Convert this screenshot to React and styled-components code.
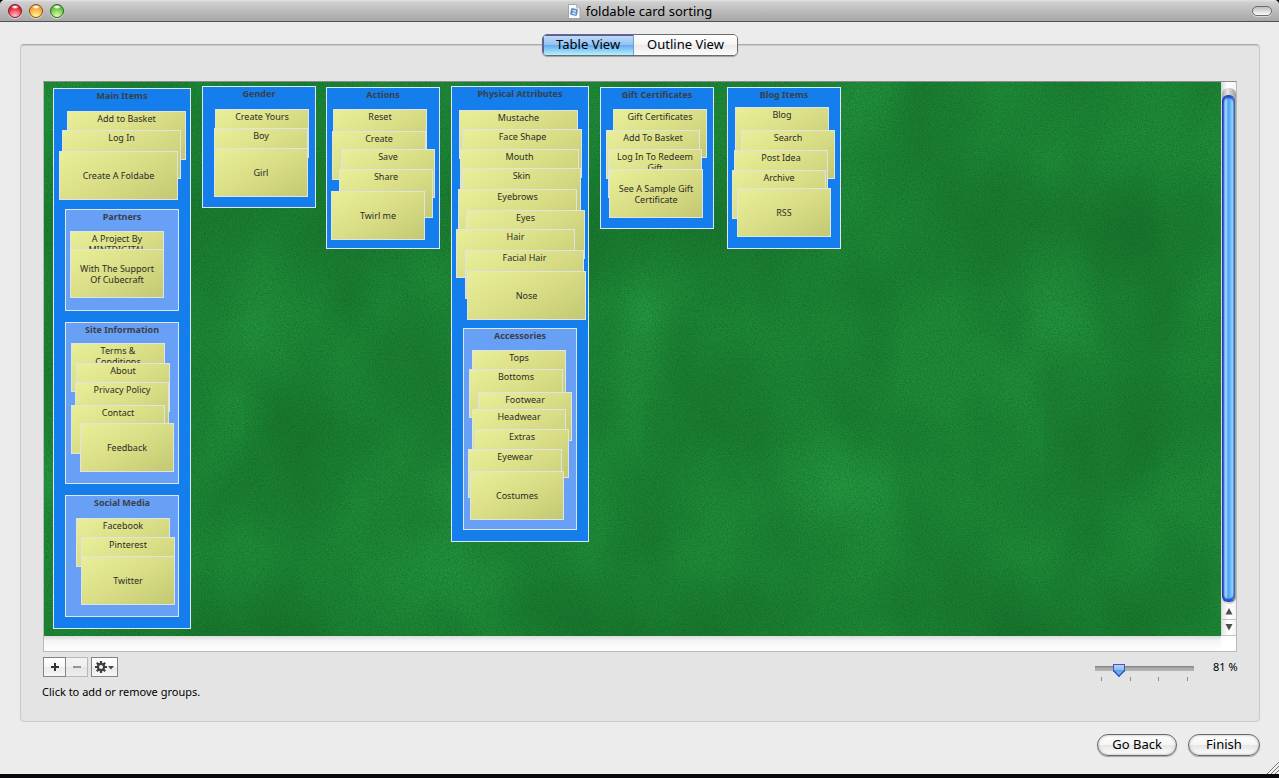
import React, { useState } from "react";
import styled, { createGlobalStyle, css } from "styled-components";

const GlobalStyle = createGlobalStyle`
  *, *::before, *::after { box-sizing: border-box; }
  body {
    margin: 0;
    background: #08090c;
    color: #000;
    font-family: "Noto Sans", "Open Sans", "Liberation Sans", sans-serif;
    font-size: 13px;
  }
  button { font: inherit; color: inherit; margin: 0; padding: 0; }
  ul { list-style: none; margin: 0; padding: 0; }
`;

/* ---------- window ---------- */

const Desktop = styled.div`
  display: flex;
  flex-direction: column;
  min-height: 100vh;
  padding-bottom: 4px;
  background: #08090c;
`;

const Window = styled.div`
  position: relative;
  flex: 1;
  display: flex;
  flex-direction: column;
  border-radius: 5px 5px 0 0;
  overflow: hidden;
  background: #ececec;
`;

const TitleBar = styled.header`
  display: grid;
  grid-template-columns: 1fr auto 1fr;
  align-items: center;
  height: 22px;
  padding: 0 7px 0 8px;
  background: linear-gradient(#e4e4e4 0, #cfcfcf 2px, #a7a7a7 100%);
  border-bottom: 1px solid #515151;
`;

const Lights = styled.div`
  display: flex;
  gap: 7px;
`;

const lightColors = {
  red: ["#7d1a22", "#e3122d", "#ffb3b3"],
  amber: ["#8f4d10", "#f39a2b", "#fff08a"],
  green: ["#2c6a1c", "#57b93a", "#d2f7a0"],
};

const Light = styled.button`
  width: 14px;
  height: 14px;
  border: 1px solid ${(p) => lightColors[p.$tone][0]};
  border-radius: 50%;
  background:
    radial-gradient(ellipse 4px 2px at 50% 2px, #fff 30%, transparent 100%),
    radial-gradient(circle at 50% 95%, ${(p) => lightColors[p.$tone][2]} 10%, ${(p) => lightColors[p.$tone][1]} 75%);
  box-shadow: 0 1px 0 rgba(255, 255, 255, 0.6);
`;

const Title = styled.h1`
  display: flex;
  align-items: center;
  gap: 5px;
  margin: 0;
  font-size: 13px;
  font-weight: 400;
  line-height: 20px;
`;

const Pill = styled.button`
  justify-self: end;
  width: 20px;
  height: 10px;
  border: 1px solid #6d6d6d;
  border-radius: 5px;
  background: linear-gradient(#bdbdbd, #fafafa);
  box-shadow: 0 1px 0 rgba(255, 255, 255, 0.5);
`;

const Content = styled.main`
  flex: 1;
  display: flex;
  flex-direction: column;
  padding: 12px 19px 18px 20px;
`;

const Tabs = styled.div`
  align-self: center;
  display: flex;
  z-index: 1;
  height: 22px;
  margin-bottom: -12px;
  border: 1px solid #6b6b6b;
  border-radius: 5px;
  overflow: hidden;
  box-shadow: 0 1px 1px rgba(0, 0, 0, 0.3);
`;

const Tab = styled.button`
  padding: 0 13px 2px;
  border: 0;
  line-height: 18px;
  background: linear-gradient(#fff, #f4f4f4 50%, #e9e9e9 50%, #fbfbfb);
  ${(p) =>
    p.$active &&
    css`
      border-right: 1px solid #6f9fce;
      background: linear-gradient(#c5dcf7 0, #92c3f4 48%, #62a9ee 50%, #b5f1ff 100%);
      box-shadow: inset 0 1px 0 #5a56c0, inset 1px 0 0 #4f62b8;
    `}
`;

const Panel = styled.section`
  flex: 1;
  display: flex;
  flex-direction: column;
  padding: 36px 22px 20px;
  border: 1px solid #cacaca;
  border-top-color: #a9a9a9;
  border-radius: 4px;
  background: #e4e4e4;
  box-shadow: inset 0 1px 1px rgba(0, 0, 0, 0.1);
`;

/* ---------- sorting table ---------- */

const Frame = styled.div`
  flex: 1;
  display: grid;
  grid-template-columns: 1fr 15px;
  grid-template-rows: 1fr 15px;
  border: 1px solid #b9b9b9;
  border-top-color: #8d8d8d;
  background: #fff;
`;

const Felt = styled.div`
  position: relative;
  min-height: 554px;
  overflow: hidden;
  background:
    radial-gradient(ellipse 60px 120px at 202px 240px, rgba(44, 170, 76, 0.5), rgba(44, 170, 76, 0.14) 55%, transparent) 0 0 / 400px 100%,
    radial-gradient(ellipse 110px 70px at 200px 405px, rgba(44, 170, 76, 0.45), rgba(44, 170, 76, 0.14) 55%, transparent) 200px 0 / 400px 100%,
    radial-gradient(ellipse 70px 50px at 200px 485px, rgba(44, 170, 76, 0.25), transparent) 200px 0 / 400px 100%,
    radial-gradient(ellipse 80px 60px at 200px 20px, rgba(44, 170, 76, 0.25), transparent) 200px 0 / 400px 100%,
    radial-gradient(ellipse 120px 80px at 80px 345px, rgba(14, 84, 30, 0.2), transparent) 200px 0 / 400px 100%,
    radial-gradient(ellipse 110px 90px at 280px 150px, rgba(14, 84, 30, 0.3), transparent) 0 0 / 400px 100%,
    radial-gradient(ellipse 110px 80px at 130px 140px, rgba(14, 84, 30, 0.25), transparent) 0 0 / 400px 100%,
    radial-gradient(ellipse 190px 70px at 200px 550px, rgba(14, 84, 30, 0.3), transparent) 0 0 / 400px 100%,
    #1e8c39;
`;

const Grain = styled.svg`
  position: absolute;
  inset: 0;
  width: 100%;
  height: 100%;
`;

const Group = styled.section`
  position: absolute;
  left: ${(p) => p.$x}px;
  top: ${(p) => p.$y}px;
  width: ${(p) => (p.$wide ? 138 : 114)}px;
  height: ${(p) => p.$h}px;
  border: 1px solid #dfe6f0;
  background: ${(p) => (p.$nested ? "#68a0f5" : "#137eec")};
`;

const GroupTitle = styled.h2`
  margin: 1px 0 0;
  font-size: 9px;
  line-height: 12px;
  font-weight: 700;
  text-align: center;
  color: #3a3f49;
`;

const Card = styled.li`
  position: absolute;
  left: ${(p) => p.$x}px;
  top: ${(p) => p.$y}px;
  width: ${(p) => (p.$wide ? 119 : 94)}px;
  height: 49px;
  display: flex;
  align-items: ${(p) => (p.$front ? "center" : "flex-start")};
  justify-content: center;
  padding: ${(p) => (p.$front ? 0 : 1)}px 5px 0;
  border: 1px solid #e0e3e4;
  background: linear-gradient(150deg, #e9ef98, #d8dd86 50%, #c3c872);
  color: #2b2c26;
  font-size: 9px;
  line-height: 11px;
  text-align: center;
`;

/* ---------- scroll bars ---------- */

const VerticalBar = styled.div`
  display: flex;
  flex-direction: column;
  padding-top: 6px;
  border-left: 1px solid #d8d8d8;
  background: linear-gradient(90deg, #dedede, #fff 40%, #f2f2f2);
`;

const ThumbWell = styled.div`
  flex: 1;
  padding: 7px 1px 2px 0;
  border-radius: 7px 7px 8px 8px;
  background: linear-gradient(90deg, #aaa, #e4e4e4 40%, #9c9c9c);
`;

const Thumb = styled.div`
  height: 100%;
  border: 1px solid #1c3fb4;
  border-right-color: #3b6c9c;
  border-radius: 6px;
  background:
    linear-gradient(90deg, #2b5ee0 0, #a8d4fb 2px, #8cc4f9 4px, #4aa0f3 5px, #6cc0fb 8px, #aeeaff 10px, #4c90d8 12px);
  box-shadow: inset 0 2px 2px #2140c8, inset 0 -2px 2px #1b45d8;
`;

const ArrowButton = styled.button`
  display: grid;
  place-items: center;
  height: 16px;
  border: 0;
  border-bottom: 1px solid #c4c4c4;
  background: linear-gradient(90deg, #e6e6e6, #fff 50%, #f3f3f3);
`;

const HorizontalBar = styled.div`
  background: linear-gradient(#dcdcdc, #f6f6f6 5px, #fff);
`;

/* ---------- tools under the table ---------- */

const Tools = styled.div`
  display: flex;
  align-items: flex-start;
  gap: 3px;
  margin-top: 5px;
  height: 26px;
`;

const SquareButtons = styled.div`
  display: flex;
`;

const SquareButton = styled.button`
  display: grid;
  place-items: center;
  width: ${(p) => (p.$menu ? 27 : 23)}px;
  height: 20px;
  border: 1px solid #858585;
  background: linear-gradient(#fff, #f7f7f7 50%, #eaeaea 50%, #f6f6f6);
  &:disabled {
    border-color: #b9b9b9;
    border-left: 0;
    width: 22px;
    background: linear-gradient(#f3f3f3, #efefef 50%, #e6e6e6 50%, #ededed);
  }
`;

const Zoom = styled.div`
  display: flex;
  align-items: flex-start;
  gap: 19px;
  margin: 0 -2px 0 auto;
`;

const SliderColumn = styled.div`
  display: flex;
  flex-direction: column;
  width: 99px;
  padding-top: 7px;
`;

const Slider = styled.input`
  appearance: none;
  width: 100%;
  height: 13px;
  margin: 0;
  background: linear-gradient(#7b7b7b, #a9a9a9 2px, #b6b6b6) 0 2px / 100% 5px no-repeat;
  border-radius: 3px;
  &::-webkit-slider-thumb {
    appearance: none;
    width: 12px;
    height: 13px;
    border: 0;
    clip-path: polygon(0 0, 100% 0, 100% 7px, 50% 100%, 0 7px);
    background:
      linear-gradient(45deg, #3a4fc0 5px, transparent 6px),
      linear-gradient(-45deg, #3a4fc0 5px, transparent 6px),
      linear-gradient(#4a52c4, #4a52c4) 0 0 / 100% 1px no-repeat,
      linear-gradient(#4a52c4, #4a52c4) 0 0 / 1px 100% no-repeat,
      linear-gradient(#4a52c4, #4a52c4) 100% 0 / 1px 100% no-repeat,
      linear-gradient(#bdd6f6, #8dbdf0 45%, #5ba3e8 50%, #7cc4f4);
  }
`;

const Ticks = styled.div`
  display: flex;
  justify-content: space-between;
  padding: 0 6px;
`;

const Tick = styled.span`
  width: 1px;
  height: 4px;
  background: #8c8c8c;
`;

const ZoomValue = styled.output`
  width: 26px;
  font-size: 11px;
  line-height: 20px;
  white-space: nowrap;
`;

const Hint = styled.p`
  margin: 0 0 0 -1px;
  font-size: 11px;
  line-height: 18px;
`;

const Actions = styled.footer`
  display: flex;
  justify-content: flex-end;
  gap: 11px;
  margin-top: 12px;
`;

const PushButton = styled.button`
  height: 22px;
  min-width: 72px;
  padding: 0 14px 2px;
  border: 1px solid #686868;
  border-radius: 11px;
  line-height: 18px;
  background: linear-gradient(#fff, #f5f5f5 48%, #e6e6e6 52%, #fdfdfd);
  box-shadow: 0 1px 1px rgba(0, 0, 0, 0.3), inset 0 0 2px 1px rgba(0, 0, 0, 0.16);
`;

const Grip = styled.svg`
  position: absolute;
  right: 0;
  bottom: 0;
`;

/* ---------- data: [label, x, y] inside each group ---------- */

const groups = [
  {
    title: "Main Items", x: 9, y: 6, h: 541, wide: true,
    cards: [["Add to Basket", 13, 22], ["Log In", 8, 41], ["Create A Foldabe", 5, 62]],
    groups: [
      {
        title: "Partners", x: 11, y: 120, h: 102,
        cards: [["A Project By MINTDIGITAL", 4, 21], ["With The Support Of Cubecraft", 4, 39]],
      },
      {
        title: "Site Information", x: 11, y: 233, h: 162,
        cards: [["Terms & Conditions", 5, 20], ["About", 10, 40], ["Privacy Policy", 9, 59], ["Contact", 5, 82], ["Feedback", 14, 100]],
      },
      {
        title: "Social Media", x: 11, y: 406, h: 122,
        cards: [["Facebook", 10, 22], ["Pinterest", 15, 41], ["Twitter", 15, 60]],
      },
    ],
  },
  {
    title: "Gender", x: 158, y: 4, h: 122,
    cards: [["Create Yours", 12, 22], ["Boy", 11, 41], ["Girl", 11, 61]],
  },
  {
    title: "Actions", x: 282, y: 5, h: 162,
    cards: [["Reset", 6, 21], ["Create", 5, 43], ["Save", 14, 61], ["Share", 12, 81], ["Twirl me", 4, 103]],
  },
  {
    title: "Physical Attributes", x: 407, y: 4, h: 456, wide: true,
    cards: [
      ["Mustache", 7, 23], ["Face Shape", 11, 42], ["Mouth", 8, 62], ["Skin", 10, 81], ["Eyebrows", 6, 102],
      ["Eyes", 14, 123], ["Hair", 4, 142], ["Facial Hair", 13, 163], ["Nose", 15, 184],
    ],
    groups: [
      {
        title: "Accessories", x: 11, y: 241, h: 202,
        cards: [
          ["Tops", 8, 21], ["Bottoms", 5, 40], ["Footwear", 14, 63], ["Headwear", 8, 80],
          ["Extras", 11, 100], ["Eyewear", 4, 120], ["Costumes", 6, 142],
        ],
      },
    ],
  },
  {
    title: "Gift Certificates", x: 556, y: 5, h: 142,
    cards: [["Gift Certificates", 12, 21], ["Add To Basket", 5, 42], ["Log In To Redeem Gift", 7, 61], ["See A Sample Gift Certificate", 8, 81]],
  },
  {
    title: "Blog Items", x: 683, y: 5, h: 162,
    cards: [["Blog", 7, 19], ["Search", 13, 42], ["Post Idea", 6, 62], ["Archive", 4, 82], ["RSS", 9, 100]],
  },
];

function CardGroup({ group, nested }) {
  return (
    <Group $x={group.x} $y={group.y} $h={group.h} $wide={group.wide} $nested={nested}>
      <GroupTitle>{group.title}</GroupTitle>
      <ul>
        {group.cards.map(([label, x, y], i) => (
          <Card key={label} $x={x} $y={y} $wide={group.wide} $front={i === group.cards.length - 1}>
            {label}
          </Card>
        ))}
      </ul>
      {group.groups?.map((g) => <CardGroup key={g.title} group={g} nested />)}
    </Group>
  );
}

function DocumentIcon() {
  return (
    <svg width="13" height="16" viewBox="0 0 13 16" aria-hidden="true">
      <path d="M.5 1.500h8l3.500 3.500v10.500H.5z" fill="#fbfbfb" stroke="#a5a5a5" />
      <path d="M8.500 1.500v3.500H12z" fill="#ddd" stroke="#a5a5a5" strokeWidth=".7" />
      <rect x="2.500" y="5.500" width="7" height="7" rx="1.500" fill="#5f90c8" transform="rotate(12 6 9)" />
      <path d="M4.500 7.500l3.500.5-3.500 2.500 3.500.5" fill="none" stroke="#e4effb" />
    </svg>
  );
}

function GearIcon() {
  return (
    <svg width="21" height="14" viewBox="0 0 21 14" aria-hidden="true">
      <g stroke="#3f3f3f" strokeWidth="2.200">
        <path d="M7 1v12M1 7h12M2.800 2.800l8.400 8.400M11.200 2.800l-8.400 8.400" />
      </g>
      <circle cx="7" cy="7" r="4.200" fill="#3f3f3f" />
      <circle cx="7" cy="7" r="2" fill="#f1f1f1" />
      <path d="M14 6h6l-3 3.500z" fill="#4a4a4a" />
    </svg>
  );
}

export default function App() {
  const [view, setView] = useState("table");
  const [zoom, setZoom] = useState(81);
  return (
    <>
      <GlobalStyle />
      <Desktop>
        <Window>
          <TitleBar>
            <Lights>
              <Light $tone="red" aria-label="Close" />
              <Light $tone="amber" aria-label="Minimize" />
              <Light $tone="green" aria-label="Zoom" />
            </Lights>
            <Title>
              <DocumentIcon />
              foldable card sorting
            </Title>
            <Pill aria-label="Toggle toolbar" />
          </TitleBar>
          <Content>
            <Tabs role="tablist">
              <Tab role="tab" aria-selected={view === "table"} $active={view === "table"} onClick={() => setView("table")}>
                Table View
              </Tab>
              <Tab role="tab" aria-selected={view === "outline"} $active={view === "outline"} onClick={() => setView("outline")}>
                Outline View
              </Tab>
            </Tabs>
            <Panel>
              <Frame>
                <Felt>
                  <Grain aria-hidden="true">
                    <filter id="cloud" x="0" y="0" width="100%" height="100%" colorInterpolationFilters="sRGB">
                      <feTurbulence type="fractalNoise" baseFrequency="0.014 0.009" numOctaves="2" seed="9" />
                      <feColorMatrix values="0 0 0 0 0.07  0 0 0 0 0.38  0 0 0 0 0.13  0.7 0 0 0 -0.22" />
                    </filter>
                    <filter id="grain" x="0" y="0" width="100%" height="100%" colorInterpolationFilters="sRGB">
                      <feTurbulence type="fractalNoise" baseFrequency="0.71" numOctaves="2" seed="4" />
                      <feColorMatrix values="0 0 0 0 0.05  0 0 0 0 0.3  0 0 0 0 0.1  0.7 0.4 0 0 -0.42" />
                    </filter>
                    <rect width="100%" height="100%" filter="url(#cloud)" />
                    <rect width="100%" height="100%" filter="url(#grain)" />
                  </Grain>
                  {groups.map((g) => <CardGroup key={g.title} group={g} />)}
                </Felt>
                <VerticalBar>
                  <ThumbWell>
                    <Thumb />
                  </ThumbWell>
                  <ArrowButton aria-label="Scroll up">
                    <svg width="8" height="7" viewBox="0 0 8 7"><path d="M4 0l3.500 6.500h-7z" fill="#4d4d4d" /></svg>
                  </ArrowButton>
                  <ArrowButton aria-label="Scroll down">
                    <svg width="8" height="7" viewBox="0 0 8 7"><path d="M4 6.500L.5 0h7z" fill="#4d4d4d" /></svg>
                  </ArrowButton>
                </VerticalBar>
                <HorizontalBar />
              </Frame>
              <Tools>
                <SquareButtons>
                  <SquareButton aria-label="Add group">
                    <svg width="8" height="8" viewBox="0 0 8 8"><path d="M4 0v8M0 4h8" stroke="#333" strokeWidth="2" /></svg>
                  </SquareButton>
                  <SquareButton aria-label="Remove group" disabled>
                    <svg width="8" height="8" viewBox="0 0 8 8"><path d="M0 4h8" stroke="#949494" strokeWidth="2" /></svg>
                  </SquareButton>
                </SquareButtons>
                <SquareButton aria-label="Group actions" $menu>
                  <GearIcon />
                </SquareButton>
                <Zoom>
                  <SliderColumn>
                    <Slider
                      type="range"
                      id="zoom"
                      aria-label="Zoom"
                      min="50"
                      max="200"
                      value={zoom}
                      onChange={(e) => setZoom(e.target.value)}
                    />
                    <Ticks>
                      <Tick /><Tick /><Tick /><Tick />
                    </Ticks>
                  </SliderColumn>
                  <ZoomValue htmlFor="zoom">{zoom} %</ZoomValue>
                </Zoom>
              </Tools>
              <Hint>Click to add or remove groups.</Hint>
            </Panel>
            <Actions>
              <PushButton>Go Back</PushButton>
              <PushButton>Finish</PushButton>
            </Actions>
          </Content>
          <Grip width="12" height="12" viewBox="0 0 12 12" aria-hidden="true">
            <path d="M0 12L12 0M4 12l8-8M8 12l4-4" stroke="#777" />
            <path d="M1.500 12L12 1.500M5.500 12L12 5.500M9.500 12L12 9.500" stroke="#fff" strokeWidth=".6" />
          </Grip>
        </Window>
      </Desktop>
    </>
  );
}
